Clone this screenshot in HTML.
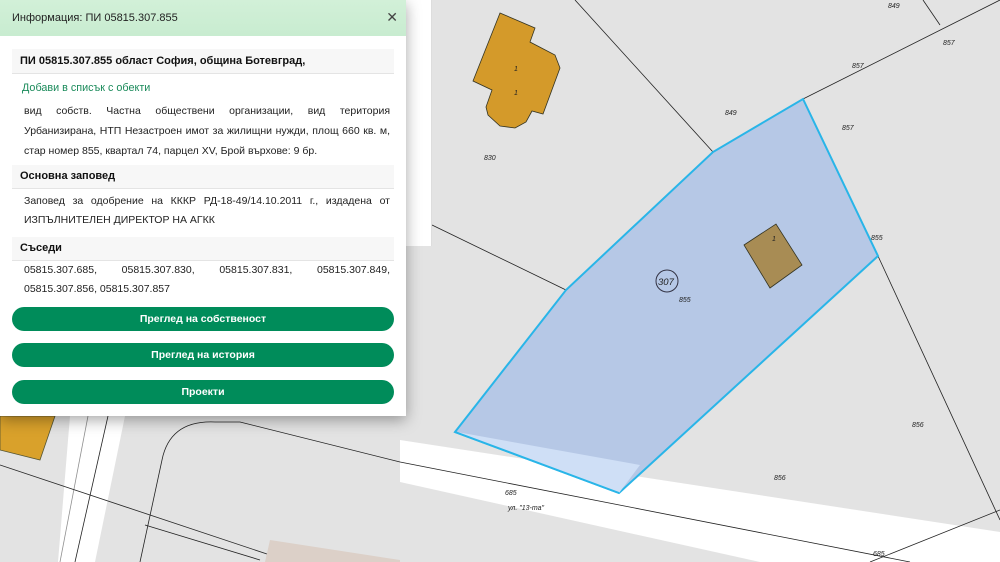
<!DOCTYPE html>
<html><head><meta charset="utf-8"><style>
*{margin:0;padding:0;box-sizing:border-box}
html,body{width:1000px;height:562px;overflow:hidden}
body{background:#e2e2e2;font-family:"Liberation Sans","DejaVu Sans",sans-serif;position:relative}
svg.map{position:absolute;left:0;top:0}
.back{position:absolute;left:0;top:0;width:432px;height:246px;background:#fff;border-right:1px solid #ddd}
.panel{position:absolute;left:0;top:0;width:406px;height:416px;background:#fff;box-shadow:0 4px 14px rgba(0,0,0,.35);overflow:hidden}
.panel>div{position:absolute}
.hdr{left:0;top:0;width:406px;height:36px;background:linear-gradient(#d2f0d8,#c8ecd0);font-size:11px;color:#222;padding:12px 12px}
.hdr .x{position:absolute;right:8px;top:9px;font-size:14px;font-weight:bold;color:#444}
.sec{left:12px;width:382px;background:#f7f7f7;border-bottom:1px solid #e4e4e4;font-weight:bold;font-size:11px;color:#111;padding:0 8px;height:24px;line-height:23px}
.txt{left:24px;width:366px;font-size:10.5px;line-height:20px;color:#222;text-align:justify}
.lnk{left:22px;color:#1a8a5a;font-size:10.8px}
.btn{left:12px;width:382px;height:24px;border-radius:12px;background:#008c5a;color:#fff;font-weight:bold;font-size:10.5px;text-align:center;line-height:24px}
</style></head><body>
<svg class="map" width="1000" height="562" viewBox="0 0 1000 562">
<rect width="1000" height="562" fill="#e3e3e3"/>
<polygon points="400,440 1000,532 1000,562 760,562 400,482" fill="#fff"/>
<polygon points="70,416 125,416 95,562 58,562" fill="#fff"/>
<line x1="108" y1="416" x2="75" y2="562" stroke="#222" stroke-width="0.8"/>
<line x1="88" y1="416" x2="60" y2="562" stroke="#222" stroke-width="0.8" opacity=".5"/>
<path d="M140,562 L162,460 Q170,420 215,422 L240,422 L400,462" fill="none" stroke="#222" stroke-width="0.8"/>
<line x1="400" y1="462" x2="910" y2="562" stroke="#222" stroke-width="0.8"/>
<line x1="0" y1="465" x2="270" y2="555" stroke="#222" stroke-width="0.8"/>
<line x1="145" y1="525" x2="260" y2="560" stroke="#222" stroke-width="0.8"/>
<polygon points="270,540 400,560 400,562 265,562" fill="#dcd0c8"/>
<polygon points="0,416 55,416 40,460 0,450" fill="#d9a12b" stroke="#553" stroke-width=".8"/>
<line x1="575" y1="0" x2="713" y2="152" stroke="#222" stroke-width="0.8"/>
<line x1="803" y1="99" x2="1000" y2="0" stroke="#222" stroke-width="0.8"/>
<line x1="923" y1="0" x2="940" y2="25" stroke="#222" stroke-width="0.8"/>
<line x1="878" y1="256" x2="1000" y2="520" stroke="#222" stroke-width="0.8"/>
<line x1="432" y1="225" x2="566" y2="290" stroke="#222" stroke-width="0.8"/>
<line x1="870" y1="562" x2="1000" y2="510" stroke="#222" stroke-width="0.8"/>
<polygon points="455,432 566,290 713,152 803,99 878,256 619,493" fill="#b6c8e6" stroke="#29b5e8" stroke-width="2"/>
<polygon points="457,432 640,465 619,493" fill="#cfdff6"/>
<line x1="455" y1="432" x2="619" y2="493" stroke="#29b5e8" stroke-width="2"/>
<polygon points="500,13 535,28 530,42 555,55 560,68 543,114 532,111 526,122 515,128 500,126 488,115 486,107 492,90 473,81" fill="#d49a2a" stroke="#332" stroke-width="0.8"/>
<polygon points="744,245 776,224 802,265 770,288" fill="#a88c54" stroke="#332" stroke-width="0.8"/>
<circle cx="667" cy="281" r="11" fill="none" stroke="#334" stroke-width="1"/>
<g font-size="7" font-style="italic" fill="#222" font-family="Liberation Sans">
<text x="658" y="285" font-size="9.5">307</text>
<text x="679" y="302">855</text><text x="484" y="160">830</text><text x="725" y="115">849</text>
<text x="888" y="8">849</text><text x="943" y="45">857</text><text x="852" y="68">857</text><text x="842" y="130">857</text>
<text x="871" y="240">855</text><text x="774" y="480">856</text><text x="912" y="427">856</text>
<text x="505" y="495">685</text><text x="508" y="510">ул. "13-та"</text><text x="873" y="556">685</text>
<text x="514" y="71">1</text><text x="514" y="95">1</text><text x="772" y="241">1</text></g>
</svg>
<div class="back"></div>
<div class="panel">
<div class="hdr">Информация: ПИ 05815.307.855<span class="x">✕</span></div>
<div class="sec" style="top:49px;height:25px;line-height:25px">ПИ 05815.307.855 област София, община Ботевград,</div>
<div class="lnk" style="top:82px">Добави в списък с обекти</div>
<div class="txt" style="top:101px">вид собств. Частна обществени организации, вид територия Урбанизирана, НТП Незастроен имот за жилищни нужди, площ 660&nbsp;кв.&nbsp;м, стар номер 855, квартал 74, парцел XV, Брой върхове: 9 бр.</div>
<div class="sec" style="top:165px">Основна заповед</div>
<div class="txt" style="top:192px;line-height:19px">Заповед за одобрение на КККР РД-18-49/14.10.2011 г., издадена от ИЗПЪЛНИТЕЛЕН ДИРЕКТОР НА АГКК</div>
<div class="sec" style="top:237px">Съседи</div>
<div class="txt" style="top:261px;line-height:19px">05815.307.685, &nbsp; &nbsp; &nbsp; 05815.307.830, &nbsp; &nbsp; &nbsp; 05815.307.831, &nbsp; &nbsp; &nbsp; 05815.307.849, 05815.307.856, 05815.307.857</div>
<div class="btn" style="top:307px">Преглед на собственост</div>
<div class="btn" style="top:343px">Преглед на история</div>
<div class="btn" style="top:380px">Проекти</div>
</div>
</body></html>
